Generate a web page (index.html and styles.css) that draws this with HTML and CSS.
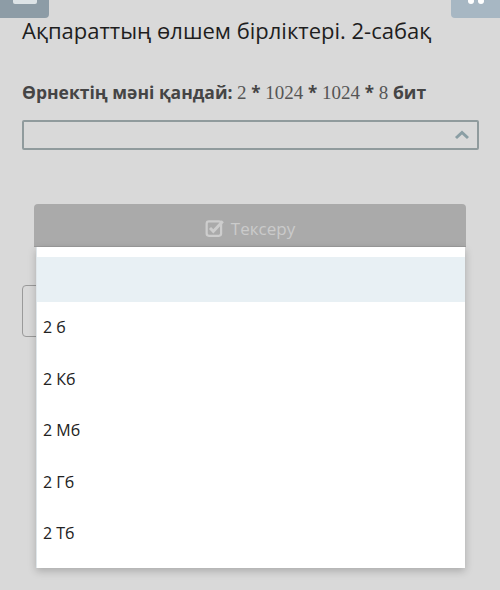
FILE: index.html
```html
<!DOCTYPE html>
<html lang="kk">
<head>
  <meta charset="UTF-8">
  <meta name="viewport" content="width=device-width, initial-scale=1.0">
  <title>Ақпараттың өлшем бірліктері</title>
  <link rel="stylesheet" href="styles.css">
</head>
<body>
  <div class="topbar">
    <button class="menu-btn"><span class="menu-icon"></span></button>
    <button class="close-btn">
      <svg width="20" height="8" viewBox="0 0 20 8">
        <circle cx="5" cy="1" r="3" fill="#fff"/>
        <circle cx="15" cy="1" r="3" fill="#fff"/>
      </svg>
    </button>
  </div>

  <div class="quiz">
    <h1 class="title">Ақпараттың өлшем бірліктері. 2-сабақ</h1>

    <p class="question">
      Өрнектің мәні қандай:
      <span class="math">2 <b>*</b> 1024 <b>*</b> 1024 <b>*</b> 8</span>
      бит
    </p>

    <div class="select">
      <svg class="chevron" width="16" height="10" viewBox="0 0 16 10">
        <path d="M2 8 L8 2.5 L14 8" fill="none" stroke="#8a9ea4" stroke-width="3"/>
      </svg>
    </div>

    <div class="actions">
      <button class="check-btn">
        <svg width="20" height="20" viewBox="0 0 18 18">
          <rect x="1.5" y="3" width="13" height="13" rx="2" fill="none" stroke="#cdcdcd" stroke-width="2"/>
          <path d="M4.5 9 L7.5 12 L16 3" fill="none" stroke="#cdcdcd" stroke-width="2.6"/>
        </svg>
        Тексеру
      </button>
      <div class="answer-box"></div>

      <!-- open dropdown of the select -->
      <ul class="dropdown">
        <li class="option option-empty"></li>
        <li class="option">2 б</li>
        <li class="option">2 Кб</li>
        <li class="option">2 Мб</li>
        <li class="option">2 Гб</li>
        <li class="option">2 Тб</li>
      </ul>
    </div>
  </div>
</body>
</html>
```

FILE: styles.css
```css
/* General styling */
html, body {
  min-height: 590px;
}

body {
  margin: 0;
  background-color: #d9d9d9;
  font-family: "Open Sans", "Noto Sans", sans-serif;
  color: #222;
}

/* Top bar buttons */
.topbar {
  display: flex;
  justify-content: space-between;
  height: 18px;
}

.topbar button {
  width: 49px;
  height: 18px;
  border: none;
  padding: 0;
}

.menu-btn {
  background-color: #8d9ca6;
  border-radius: 0 0 4px 0;
  display: flex;
  justify-content: center;
}

.menu-icon {
  width: 24px;
  height: 4px;
  background-color: #dde3e6;
  border-radius: 0 0 2px 2px;
}

.close-btn {
  background-color: #a7b7c3;
  border-radius: 0 0 0 4px;
  display: flex;
  justify-content: center;
  align-items: flex-start;
}

/* Quiz content */
.quiz {
  padding: 0 21px 0 22px;
}

.title {
  margin: -2px 0 0;
  font-size: 22px;
  font-weight: 400;
  line-height: 28px;
  color: #1e1e1e;
}

.question {
  margin: 36px 0 0;
  font-size: 17.5px;
  font-weight: 700;
  line-height: 24px;
  color: #454545;
}

.math {
  font-family: "Liberation Serif", "DejaVu Serif", serif;
  font-weight: 400;
  font-size: 19px;
  color: #555;
}

.math b {
  font-family: "Open Sans", sans-serif;
  font-weight: 700;
  font-size: 17px;
  color: #454545;
}

/* Select field */
.select {
  margin-top: 15px;
  height: 26px;
  border: 2px solid #909b9d;
  border-radius: 2px;
  display: flex;
  justify-content: flex-end;
  align-items: center;
  padding-right: 7px;
}

/* Check button + dropdown */
.actions {
  position: relative;
  margin-top: 54px;
}

.check-btn {
  display: flex;
  justify-content: center;
  align-items: center;
  gap: 6px;
  width: 432px;
  height: 43px;
  margin-left: 12px;
  padding: 6px 0 0;
  border: none;
  border-bottom: 1px solid #9c9c9c;
  border-radius: 4px 4px 0 0;
  background-color: #aaaaaa;
  color: #cbcbcb;
  font-family: "Open Sans", sans-serif;
  font-size: 17px;
}

.answer-box {
  width: 420px;
  height: 50px;
  margin-top: 38px;
  border: 1px solid #9a9a9a;
  border-radius: 4px;
}

.dropdown {
  position: absolute;
  top: 43px;
  left: 14px;
  width: 428px;
  margin: 0;
  padding: 10px 0 8.5px;
  list-style: none;
  background-color: #fff;
  border-left: 1px solid #dfe6ea;
  box-shadow: 0 3px 8px rgba(0, 0, 0, 0.22);
}

.option {
  height: 51.5px;
  line-height: 51.5px;
  padding-left: 6px;
  font-size: 16px;
  color: #222;
}

.option-empty {
  height: 45px;
  background-color: #e8f0f4;
}
```
